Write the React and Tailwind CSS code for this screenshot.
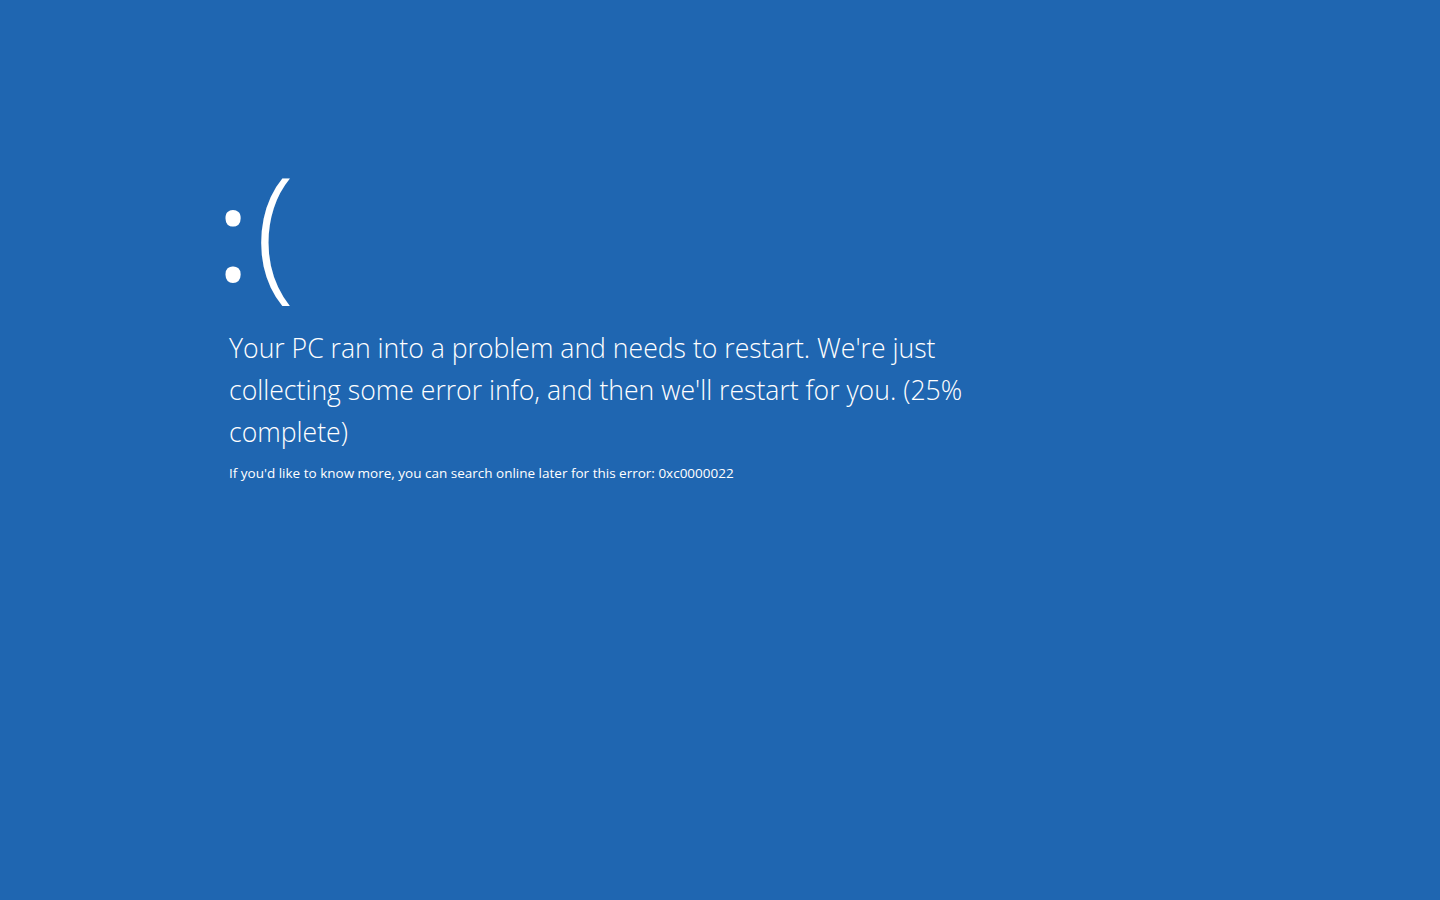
import React from 'react';

const App = () => {
  return (
    <div className="min-h-screen w-full bg-[#1f66b1] text-white font-['Open_Sans',_'Noto_Sans',sans-serif]">
      <div className="pl-[223px] pt-[137px] flex flex-col">
        <div className="flex items-baseline h-[180px] leading-[180px]">
          <span className="text-[130px] font-normal ml-[-7px] relative top-[-2px]">:</span>
          <span className="text-[145px] font-light ml-[5px]">(</span>
        </div>
        <p className="mt-[10px] pl-[6px] text-[26.6px] leading-[42px] font-light">
          Your PC ran into a problem and needs to restart. We're just<br />
          collecting some error info, and then we'll restart for you. (25%<br />
          complete)
        </p>
        <p className="mt-[10px] pl-[6px] text-[13.5px] leading-[20px] font-normal">
          If you'd like to know more, you can search online later for this error: 0xc0000022
        </p>
      </div>
    </div>
  );
};

export default App;
